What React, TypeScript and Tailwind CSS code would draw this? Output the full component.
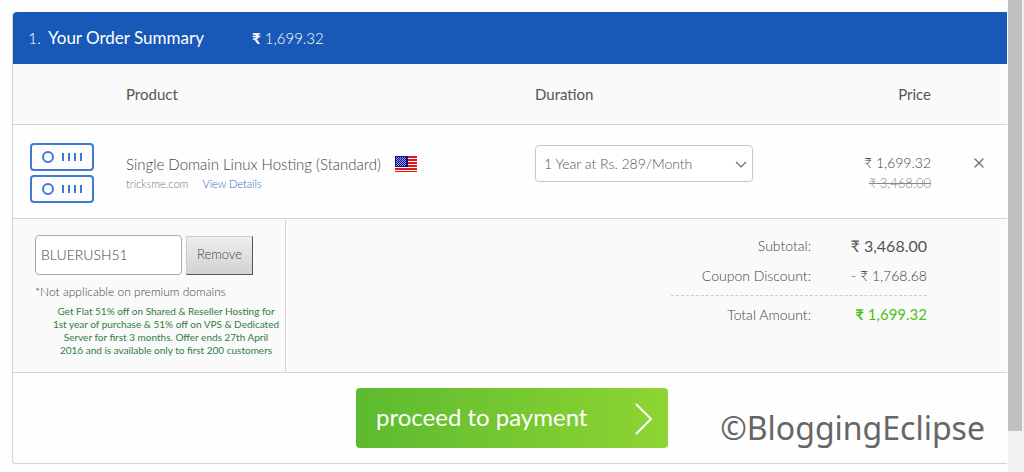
import { useState } from 'react';
import { X } from 'lucide-react';

const bars = [32, 38, 44, 50];

function ServerUnit({ y }: { y: number }) {
    return (
        <g stroke="#3f7ad6" strokeWidth="2" fill="none">
            <rect x="1" y={y + 1} width="62" height="26" rx="3" />
            <circle cx="18" cy={y + 14} r="5" />
            {bars.map((x) => (
                <path key={x} d={`M${x + 1} ${y + 10}v8`} />
            ))}
        </g>
    );
}

function ServerIcon() {
    return (
        <svg className="block h-[60px] w-16" viewBox="0 0 64 60" aria-hidden="true">
            <ServerUnit y={0} />
            <ServerUnit y={32} />
        </svg>
    );
}

function UsFlag() {
    return (
        <svg className="h-4 w-[22px]" viewBox="0 0 22 16" role="img" aria-label="United States">
            <rect width="22" height="16" fill="#fff" />
            {[0, 3, 6, 9, 12, 15].map((y) => (
                <rect key={y} y={y} width="22" height={y === 15 ? 1 : 2} fill="#e4141c" />
            ))}
            <rect width="13" height="11" fill="#10108c" />
            {[1, 2, 3, 4, 5, 6, 7, 8, 9].map((y) => (
                <path key={y} d={`M${y % 2 === 1 ? 1 : 2} ${y + 0.5}h10`} stroke="#8f9ce0" strokeDasharray="1 1" />
            ))}
        </svg>
    );
}

export default function App() {
    const [coupon, setCoupon] = useState('BLUERUSH51');
    const [term, setTerm] = useState('1 Year at Rs. 289/Month');

    return (
        <div className="flex min-h-screen bg-[#fefefe] font-['Lato','Noto_Sans',sans-serif] font-light text-[#444]">
            <main className="min-w-0 flex-1 pt-3 pb-2 pl-3">
                <section className="relative rounded-l border-b border-l border-[#d5d5d5]">
                    <header className="flex h-[52px] items-center rounded-tl bg-[#1859b7] pl-[15px] text-white">
                        <span className="w-5 text-base">1.</span>
                        <h1 className="w-[204px] text-[17px] font-normal">Your Order Summary</h1>
                        <span className="text-[15px]"><b className="font-bold">₹</b> 1,699.32</span>
                    </header>

                    <table className="w-full table-fixed text-left text-[15px]">
                        <thead>
                            <tr className="h-[60px] border-b border-[#d5d5d5] bg-[#fafafa] text-[#555]">
                                <td className="w-[113px]" />
                                <th className="font-normal" scope="col">Product</th>
                                <th className="w-[218px] font-normal" scope="col">Duration</th>
                                <th className="w-[178px] text-right font-normal" scope="col">Price</th>
                                <td className="w-[76px]" />
                            </tr>
                        </thead>
                        <tbody>
                            <tr className="h-[94px] border-b border-[#d5d5d5]">
                                <td className="pt-1 pl-[17px]">
                                    <ServerIcon />
                                </td>
                                <td className="pt-0.5">
                                    <div className="flex items-center gap-3.5">
                                        <span className="text-[15px] leading-6">Single Domain Linux Hosting (Standard)</span>
                                        <UsFlag />
                                    </div>
                                    <div className="flex gap-3.5 text-[11px] leading-4 text-[#777]">
                                        <span>tricksme.com</span>
                                        <a href="#details" className="text-[#3465c8]">View Details</a>
                                    </div>
                                </td>
                                <td className="pb-4">
                                    <div className="relative">
                                        <select
                                            aria-label="Duration"
                                            className="h-[37px] w-full appearance-none rounded border border-[#c8c8c8] bg-white pl-2 text-[14px] text-[#555]"
                                            value={term}
                                            onChange={(e) => setTerm(e.target.value)}
                                        >
                                            <option>1 Year at Rs. 289/Month</option>
                                        </select>
                                        <svg
                                            className="pointer-events-none absolute top-4 right-1.5 h-[7px] w-3 text-[#666]"
                                            viewBox="0 0 12 7"
                                            fill="none"
                                            stroke="currentColor"
                                            aria-hidden="true"
                                        >
                                            <path d="M1 1l5 5 5-5" strokeWidth="1.2" />
                                        </svg>
                                    </div>
                                </td>
                                <td className="pt-1 text-right">
                                    <div className="text-[14px] leading-5">₹ 1,699.32</div>
                                    <del className="block text-[13px] leading-5 text-[#888]">₹ 3,468.00</del>
                                </td>
                                <td className="pr-5 pb-4">
                                    <button type="button" aria-label="Remove item" className="ml-auto block">
                                        <X className="h-4 w-4 text-[#777]" />
                                    </button>
                                </td>
                            </tr>
                        </tbody>
                    </table>

                    <div className="flex h-[154px] border-b border-[#d5d5d5] bg-[#fafafa]">
                        <div className="w-[273px] border-r border-[#d5d5d5] pt-4 pl-[22px]">
                            <div className="flex items-end gap-1">
                                <input
                                    aria-label="Coupon code"
                                    className="h-10 w-[147px] rounded border border-[#aaa] bg-white px-[5px] text-[14px]"
                                    value={coupon}
                                    onChange={(e) => setCoupon(e.target.value)}
                                />
                                <button
                                    type="button"
                                    className="h-[39px] w-[67px] border border-t-[#ccc] border-r-[#555] border-b-[#555] border-l-[#ccc] bg-linear-to-b from-[#eee] to-[#d2d2d2] text-[13px]"
                                    onClick={() => setCoupon('')}
                                >
                                    Remove
                                </button>
                            </div>
                            <p className="mt-2 text-[12px] leading-[18px]">*Not applicable on premium domains</p>
                            <p className="mt-1 pr-1 pl-4 text-center text-[10px] leading-[13px] font-normal whitespace-nowrap text-[#2f7d42]">
                                Get Flat 51% off on Shared &amp; Reseller Hosting for
                                <br />
                                1st year of purchase &amp; 51% off on VPS &amp; Dedicated
                                <br />
                                Server for first 3 months. Offer ends 27th April
                                <br />
                                2016 and is available only to first 200 customers
                            </p>
                        </div>
                        <div className="flex flex-1 justify-end pt-3 pr-20">
                            <dl className="w-64 text-[14px]">
                                <div className="flex h-[30px] items-center text-right">
                                    <dt className="w-[140px]">Subtotal:</dt>
                                    <dd className="flex-1 text-base font-normal text-[#555]">₹ 3,468.00</dd>
                                </div>
                                <div className="flex h-[30px] items-center text-right">
                                    <dt className="w-[140px]">Coupon Discount:</dt>
                                    <dd className="flex-1">- ₹ 1,768.68</dd>
                                </div>
                                <div className="mt-1 flex h-[38px] items-center border-t border-dashed border-[#ccc] text-right">
                                    <dt className="w-[140px]">Total Amount:</dt>
                                    <dd className="flex-1 text-[15px] font-normal text-[#56bd1e]">
                                        <b className="font-bold">₹</b> 1,699.32
                                    </dd>
                                </div>
                            </dl>
                        </div>
                    </div>

                    <div className="flex h-[90px] items-center justify-center pl-1">
                        <button
                            type="button"
                            className="flex h-[60px] w-[312px] items-center justify-between rounded bg-linear-to-r from-[#5cba30] to-[#8dd532] pr-3.5 pb-0.5 pl-5 text-2xl font-normal text-white"
                        >
                            proceed to payment
                            <svg className="mt-1 h-8 w-5" viewBox="0 0 20 32" fill="none" stroke="currentColor" strokeWidth="2" aria-hidden="true">
                                <path d="M2 1l15 15L2 31" />
                            </svg>
                        </button>
                    </div>
                    <span className="absolute right-[22px] bottom-3 font-['Noto_Sans',sans-serif] text-[32px] leading-[46px] font-normal text-[#666]">
                        ©BloggingEclipse
                    </span>
                </section>
            </main>
            <div className="ml-px w-4 bg-[#f1f1f1]" aria-hidden="true">
                <div className="mr-0.5 h-[431px] bg-[#c1c1c1]" />
            </div>
        </div>
    );
}
